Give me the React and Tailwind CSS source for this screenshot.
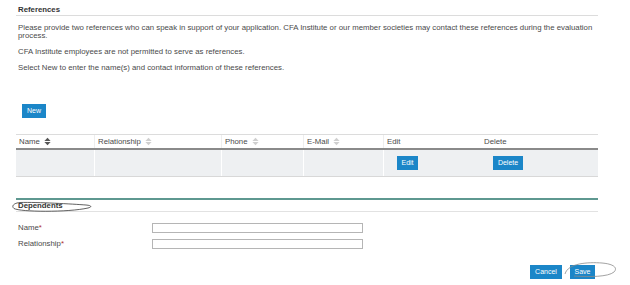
import React from 'react';

function SortIcon({ active }) {
  const c = active ? '#555' : '#cfcfcf';
  return (
    <svg width="9" height="9" viewBox="0 0 9 9" className="inline-block ml-[3px] align-[-1px]">
      <path d="M4.5 0.8 L7.6 4 H1.4 Z" fill={c} />
      <path d="M4.5 8.2 L7.6 5 H1.4 Z" fill={c} />
    </svg>
  );
}

function BlueButton({ children, className = '' }) {
  return (
    <button className={`h-[14px] bg-[#1b86c8] text-white text-[7px] leading-[14px] ${className}`}>
      {children}
    </button>
  );
}

export default function App() {
  const cols = [
    { label: 'Name', w: 'w-[79px]', sort: true, active: true },
    { label: 'Relationship', w: 'w-[127px]', sort: true },
    { label: 'Phone', w: 'w-[82px]', sort: true },
    { label: 'E-Mail', w: 'w-[80px]', sort: true },
    { label: 'Edit', w: 'w-[97px]' },
    { label: 'Delete', w: 'flex-1' },
  ];

  return (
    <div className="relative w-[630px] h-[285px] overflow-hidden bg-white font-['Liberation_Sans',Arial,sans-serif] text-[7.8px] text-[#4a4a4a] pl-4 pt-[5px]">
      <div className="w-[582px]">
        <h2 className="font-bold text-[7.8px] text-[#333] leading-[10px] pl-[2px] border-b border-[#dcdcdc]">References</h2>

        <p className="mt-[8px] pl-[2px] pr-[4px] leading-[8px]">
          Please provide two references who can speak in support of your application. CFA Institute or our member societies may contact these references during the evaluation process.
        </p>
        <p className="mt-[8px] pl-[2px] leading-[8px]">CFA Institute employees are not permitted to serve as references.</p>
        <p className="mt-[8px] pl-[2px] leading-[8px]">Select New to enter the name(s) and contact information of these references.</p>

        <BlueButton className="mt-[32px] ml-[6px] w-[24px]">New</BlueButton>

        <div className="mt-[16px]">
          <div className="flex h-[16px] items-center border-t border-[#dcdcdc] border-b-2 border-b-[#8a8a8a]">
            {cols.map((c) => (
              <div key={c.label} className={`${c.w} pl-[3px] h-full flex items-center ${c.sort ? 'border-r border-[#eee]' : ''}`}>
                <span>{c.label}</span>
                {c.sort && <SortIcon active={c.active} />}
              </div>
            ))}
          </div>
          <div className="flex h-[27px] bg-[#eef0f2] border-b border-[#d8d8d8]">
            <div className="w-[79px] border-r border-white" />
            <div className="w-[127px] border-r border-white" />
            <div className="w-[82px] border-r border-white" />
            <div className="w-[80px] border-r border-white" />
            <div className="w-[97px] flex items-center pl-[13px]">
              <BlueButton className="w-[21px]">Edit</BlueButton>
            </div>
            <div className="flex-1 flex items-center pl-[12px]">
              <BlueButton className="w-[30px]">Delete</BlueButton>
            </div>
          </div>
        </div>

        <div className="mt-[21px] h-[2px] bg-[#5e9890]" />
        <h2 className="pt-[1px] font-bold text-[7.8px] text-[#333] leading-[10px] pl-[2px] border-b border-[#e2e2e2]">Dependents</h2>

        <div className="mt-[10px] flex items-center h-[11px]">
          <label className="w-[136px] pl-[2px]">Name<span className="text-[#b03030]">*</span></label>
          <input className="w-[211px] h-[10px] border border-[#b5b5b5] bg-white" />
        </div>
        <div className="mt-[5px] flex items-center h-[11px]">
          <label className="w-[136px] pl-[2px]">Relationship<span className="text-[#b03030]">*</span></label>
          <input className="w-[211px] h-[10px] border border-[#b5b5b5] bg-white" />
        </div>

        <div className="mt-[16px] flex justify-end gap-[8px] pr-[3px]">
          <BlueButton className="w-[32px]">Cancel</BlueButton>
          <BlueButton className="w-[25px]">Save</BlueButton>
        </div>
      </div>

      <svg className="absolute left-[8px] top-[198px] pointer-events-none" width="90" height="18" viewBox="0 0 90 18">
        <path d="M12 4.5 C6 5, 3 8, 6 10.5 C12 14, 60 14.5, 80 10 C84 9, 84 7.5, 78 7 C64 6, 30 4, 12 4.5" fill="none" stroke="#3a3a3a" strokeWidth="0.8" />
      </svg>
      <svg className="absolute left-[560px] top-[259px] pointer-events-none" width="60" height="22" viewBox="0 0 60 22">
        <path d="M5 15 C8 4, 28 3, 42 4 C54 5, 58 9, 54 13 C48 18, 30 18, 14 17" fill="none" stroke="#8a8a8a" strokeWidth="0.8" />
      </svg>
    </div>
  );
}
